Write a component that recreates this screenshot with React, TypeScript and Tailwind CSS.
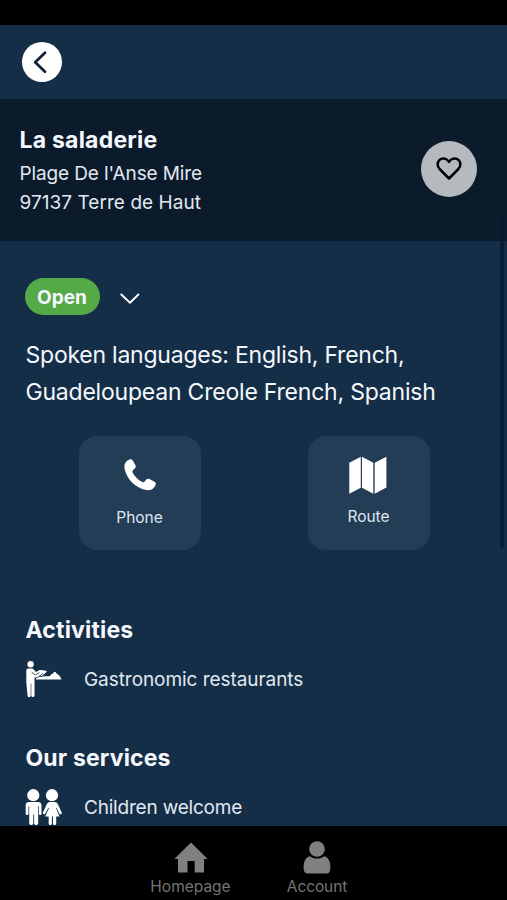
import React from "react";

function ActionCard({ label, labelClass, children }: { label: string; labelClass: string; children: React.ReactNode }) {
  return (
    <button className="flex h-[114px] w-[122px] flex-col items-center rounded-[18px] bg-[#243d56] pt-[18px]">
      <span className="flex h-[42px] items-center justify-center">{children}</span>
      <span className={`text-[15.5px] leading-5 text-[#dfe6ee] ${labelClass}`}>{label}</span>
    </button>
  );
}

function WaiterIcon() {
  return (
    <svg width="36" height="37" viewBox="0 0 36 37" fill="#fff">
      <circle cx="4.6" cy="3.3" r="3.2" />
      <path d="M2.300 7.600h4.300l3.400 3.500 3.600-2.200 4.200.4 3.300.9-2.200 2.200-3.300 2.900h8.300c.4-1.100 1.200-1.900 2.200-2.200.8-.2 1.200-.7 1.500-1.500.4-1 1.800-1 2.300 0 .3.800.8 1.300 1.700 1.700 1.100.5 1.900 1.300 2.400 2.200l1.500 3H10.300l-.8-1.700-1-.8v18.400a1.600 1.600 0 0 1-3.200.2V22.500h-.6v12.100a1.600 1.600 0 0 1-3.200 0L.3 21V10C.3 8.400 1 7.600 2.300 7.600Z" />
      <path d="m5.600 11.200 3.700 2.700 4.200-2.200M9.500 16.500l2.300-.1 5.300-4.100M14.500 14.300l-1.200 1.200h3.500" fill="none" stroke="#152e48" strokeWidth=".8" />
    </svg>
  );
}

function ChildrenIcon() {
  return (
    <svg width="38" height="37" viewBox="0 0 38 37" fill="#fff">
      <circle cx="8.300" cy="6.200" r="6.100" />
      <circle cx="27" cy="6.200" r="6.100" />
      <path d="M4 13h9c2.500 0 3.500 1.500 3.500 3.500v8.200c0 1.800-2.600 1.800-2.600 0v-7.400h-.7v17c0 2.400-4.100 2.400-4.100 0V25.500h-.8v8.800c0 2.400-4.100 2.400-4.100 0v-17h-.7v7.400c0 1.800-2.800 1.800-2.800 0v-8.200C.7 14.500 1.700 13 4 13Z" />
      <path d="M25 13h4.700c2 0 2.700 1 3.300 2.500l3.700 8c.7 1.700-1.600 2.500-2.400.9l-2.800-5.600-.5.200 3.500 8.500h-3.300v7c0 2-3.200 2-3.200 0v-7h-1.100v7c0 2-3.200 2-3.200 0v-7h-3.500L24 19l-.5-.2-3.200 5.600c-.8 1.600-3.200.7-2.400-.9l3.800-8c.7-1.500 1.500-2.500 3.300-2.500Z" />
    </svg>
  );
}

export default function App() {
  return (
    <div className="relative flex h-[900px] w-[507px] flex-col overflow-hidden bg-[#152e48] font-['Inter','Liberation_Sans',sans-serif] text-[#f5f8fc]">
      <div className="h-[25px] shrink-0 bg-black" />
      <header className="flex h-[74px] shrink-0 items-start pt-[17px] pl-[22px]">
        <button aria-label="Back" className="flex size-10 items-center justify-center rounded-full bg-white">
          <svg width="40" height="40" viewBox="0 0 40 40" fill="none" stroke="#0f2238" strokeWidth="2.700" strokeLinecap="round" strokeLinejoin="round">
            <path d="M23 10.800 13.200 20.200l9.800 9.600" />
          </svg>
        </button>
      </header>

      <section className="flex h-[142px] shrink-0 items-start justify-between bg-[#0b1b2c] pr-[30px] pl-[19.5px]">
        <div className="pt-[26px]">
          <h1 className="text-[23px] leading-[30px] font-bold tracking-[0.220px] whitespace-nowrap">La saladerie</h1>
          <p className="mt-1 text-[19px] leading-[29px] tracking-[-0.120px] whitespace-nowrap text-[#e1e8f0]">Plage De l'Anse Mire</p>
          <p className="text-[19px] leading-[29px] tracking-[0.050px] whitespace-nowrap text-[#e1e8f0]">97137 Terre de Haut</p>
        </div>
        <button aria-label="Add to favourites" className="mt-[42px] size-14 rounded-full bg-[#b5babf]">
          <svg width="56" height="56" viewBox="0 0 56 56" fill="none" stroke="#000" strokeWidth="2.500" strokeLinejoin="round">
            <path d="M28 37.500 18.600 28c-2.500-2.700-2.500-6.500-.3-8.800 2.600-2.700 6.800-2.300 9 .7l.7 1 .7-1c2.200-3 6.400-3.400 9-.7 2.200 2.300 2.200 6.100-.3 8.800L28 37.500Z" />
          </svg>
        </button>
      </section>

      <main className="flex min-h-0 flex-1 flex-col overflow-hidden pt-[37px] pl-[25.5px]">
        <div className="flex h-[37px] shrink-0 items-center gap-5">
          <span className="-ml-px flex h-[37px] w-[75px] items-center justify-center rounded-full bg-[#55aa48] pt-[3px] text-[19px] font-bold tracking-[0px]">Open</span>
          <svg width="20" height="12" viewBox="0 0 20 12" fill="none" stroke="#fff" strokeWidth="1.900" strokeLinecap="round" strokeLinejoin="round" className="mt-1">
            <path d="m1.300 1.500 8.700 8.300 8.400-8.300" />
          </svg>
        </div>
        <div className="mt-[22px] shrink-0 text-[23px] leading-[37px] whitespace-nowrap">
          <p className="tracking-[-0.230px]">Spoken languages: English, French,</p>
          <p className="tracking-[-0.210px]">Guadeloupean Creole French, Spanish</p>
        </div>
        <div className="mt-[25px] flex shrink-0 gap-[107px] pl-[53px]">
          <ActionCard label="Phone" labelClass="mt-3 tracking-[-0.050px]">
            <svg width="32" height="34" viewBox="0 0 32 34" fill="#fff" className="-mt-px">
              <path d="M5.300 1.500c1.700-.6 2.700-.3 3.600 1.300l2.500 4.500c.7 1.500.3 2.400-.8 3.300L9.200 12c-1 .8-1 1.600-.3 2.900 2.200 4 5 6.700 8.900 8.900 1.300.7 2.100.6 2.900-.4l1.300-1.600c1-1.200 2-1.500 3.500-.8l5 2.700c1.400.8 1.600 1.800 1.100 3.200-1.600 4.100-5.400 5.800-9.500 5.100C11.500 29.800 3.200 21.500.8 11.700c-1.200-4.900.4-8.600 4.500-10.200Z" />
            </svg>
          </ActionCard>
          <ActionCard label="Route" labelClass="mt-[11px]">
            <svg width="38" height="38" viewBox="0 0 38 38" fill="#fff" className="-ml-px">
              <path d="m.3 6.800 11.500-6v31L.3 37.700ZM13 .8l11.300 6v30.900L13 31.800ZM25.700 6.800l11.700-6v30.700l-11.700 6.200Z" />
            </svg>
          </ActionCard>
        </div>
        <h2 className="mt-[64px] shrink-0 text-[23px] leading-8 font-bold tracking-[0.180px] whitespace-nowrap">Activities</h2>
        <div className="mt-[14px] flex h-[38px] shrink-0 items-center">
          <span className="w-[58.5px]"><WaiterIcon /></span>
          <span className="mt-0.5 text-[19px] leading-7 tracking-[-0.060px] whitespace-nowrap text-[#e1e8f0]">Gastronomic restaurants</span>
        </div>
        <h2 className="mt-[44px] shrink-0 text-[23px] leading-8 font-bold tracking-[0.150px] whitespace-nowrap">Our services</h2>
        <div className="mt-[14px] flex h-[38px] shrink-0 items-center">
          <span className="-ml-px w-[59.5px]"><ChildrenIcon /></span>
          <span className="mt-0.5 text-[19px] leading-7 tracking-[-0.200px] whitespace-nowrap text-[#e1e8f0]">Children welcome</span>
        </div>
      </main>

      <nav className="flex h-[74px] shrink-0 justify-center gap-[57px] bg-black pr-[9px] text-[15.500px] leading-5 text-[#747474]">
        <a className="flex w-[79px] flex-col items-center pt-4">
          <svg width="34" height="31" viewBox="0 0 34 31" fill="#808080">
            <path d="M17 .5 33.700 17H30v13.500h-9.300V19h-7.200v11.500H4V17H.3Z" />
          </svg>
          <span className="mt-1">Homepage</span>
        </a>
        <a className="flex w-[60px] flex-col items-center pt-[15px]">
          <svg width="28" height="33" viewBox="0 0 28 33" fill="#808080" className="-ml-px">
            <circle cx="14" cy="8" r="7.800" />
            <path d="M6.800 15.200c4 3.200 10.400 3.200 14.400 0 4.800.8 6.600 7.200 6.100 12.800-.3 3-1.500 4.500-4.200 4.500H4.900C2.200 32.500 1 31 .7 28c-.5-5.600 1.300-12 6.100-12.800Z" />
          </svg>
          <span className="mt-[3px] tracking-[-0.100px]">Account</span>
        </a>
      </nav>

      <div className="absolute top-[213px] right-[3px] h-[335px] w-1 rounded-full bg-[#061a30]/75" />
    </div>
  );
}
